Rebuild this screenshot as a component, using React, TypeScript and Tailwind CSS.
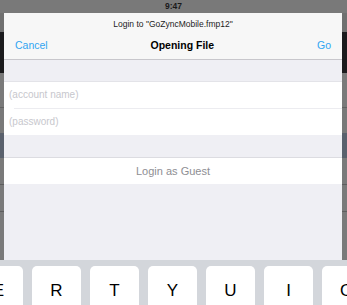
import React from "react";

const keys = ["E", "R", "T", "Y", "U", "I", "O"];

export default function App() {
  return (
    <div
      className="relative w-[347px] h-[305px] overflow-hidden bg-[#777777]"
      style={{ fontFamily: '"Liberation Sans", Arial, sans-serif' }}
    >
      {/* dimmed background screen */}
      <div className="flex flex-col">
        <div className="h-[13px] bg-[#797979] flex items-center justify-center text-[8.5px] font-bold text-[#1a1a1a] leading-none">
          9:47
        </div>
        <div className="h-[19px] bg-[#707070]" />
        <div className="h-[41px] bg-[#1b1b1d]" />
        <div className="h-[35px] bg-[#7a7a7a] border-b border-[#626262]" />
        <div className="h-[25px] bg-[#797979]" />
        <div className="h-[25px] bg-[#5a616d]" />
        <div className="h-[27px] bg-[#7a7a7a] border-b border-[#5e5e5e]" />
        <div className="h-[27px] bg-[#7a7a7a] border-b border-[#5e5e5e]" />
        <div className="h-[48px] bg-[#7a7a7a]" />
        {/* keyboard */}
        <div className="h-[45px] bg-[#d3d6db] pt-[6px] overflow-hidden">
          <div className="flex gap-[9px] ml-[-26px]">
            {keys.map((k) => (
              <div
                key={k}
                className="w-[49px] h-[48px] shrink-0 rounded-[5px] bg-white flex items-center justify-center text-[17px] text-black leading-none"
              >
                {k}
              </div>
            ))}
          </div>
        </div>
      </div>

      {/* modal sheet */}
      <div className="absolute left-[4px] top-[13px] w-[338px] h-[247px] flex flex-col bg-[#efeff4]">
        <div className="h-[47px] bg-[#f7f7f7] border-b border-[#c8c7cc] flex flex-col">
          <div className="h-[21px] flex items-center justify-center text-[8.5px] text-[#1c1c1c] leading-none pt-[1px]">
            Login to "GoZyncMobile.fmp12"
          </div>
          <div className="h-[22px] flex items-center justify-between px-[11px] text-[10.5px] leading-none">
            <span className="text-[#2fa5f2]">Cancel</span>
            <span className="font-bold text-black">Opening File</span>
            <span className="text-[#2fa5f2]">Go</span>
          </div>
        </div>
        <div className="h-[21px]" />
        <div className="bg-white border-t border-[#e3e3e8] flex flex-col">
          <div className="h-[26px] flex items-center pl-[5px] text-[10px] text-[#c7c7cd] leading-none">
            (account name)
          </div>
          <div className="h-px bg-[#ececf0] ml-[10px]" />
          <div className="h-[26px] flex items-center pl-[5px] text-[10px] text-[#c7c7cd] leading-none">
            (password)
          </div>
        </div>
        <div className="h-[22px]" />
        <div className="bg-white border-t border-[#dcdce1] h-[27px] flex items-center justify-center text-[11px] text-[#8e8e93] leading-none">
          Login as Guest
        </div>
        <div className="flex-1" />
      </div>
    </div>
  );
}
